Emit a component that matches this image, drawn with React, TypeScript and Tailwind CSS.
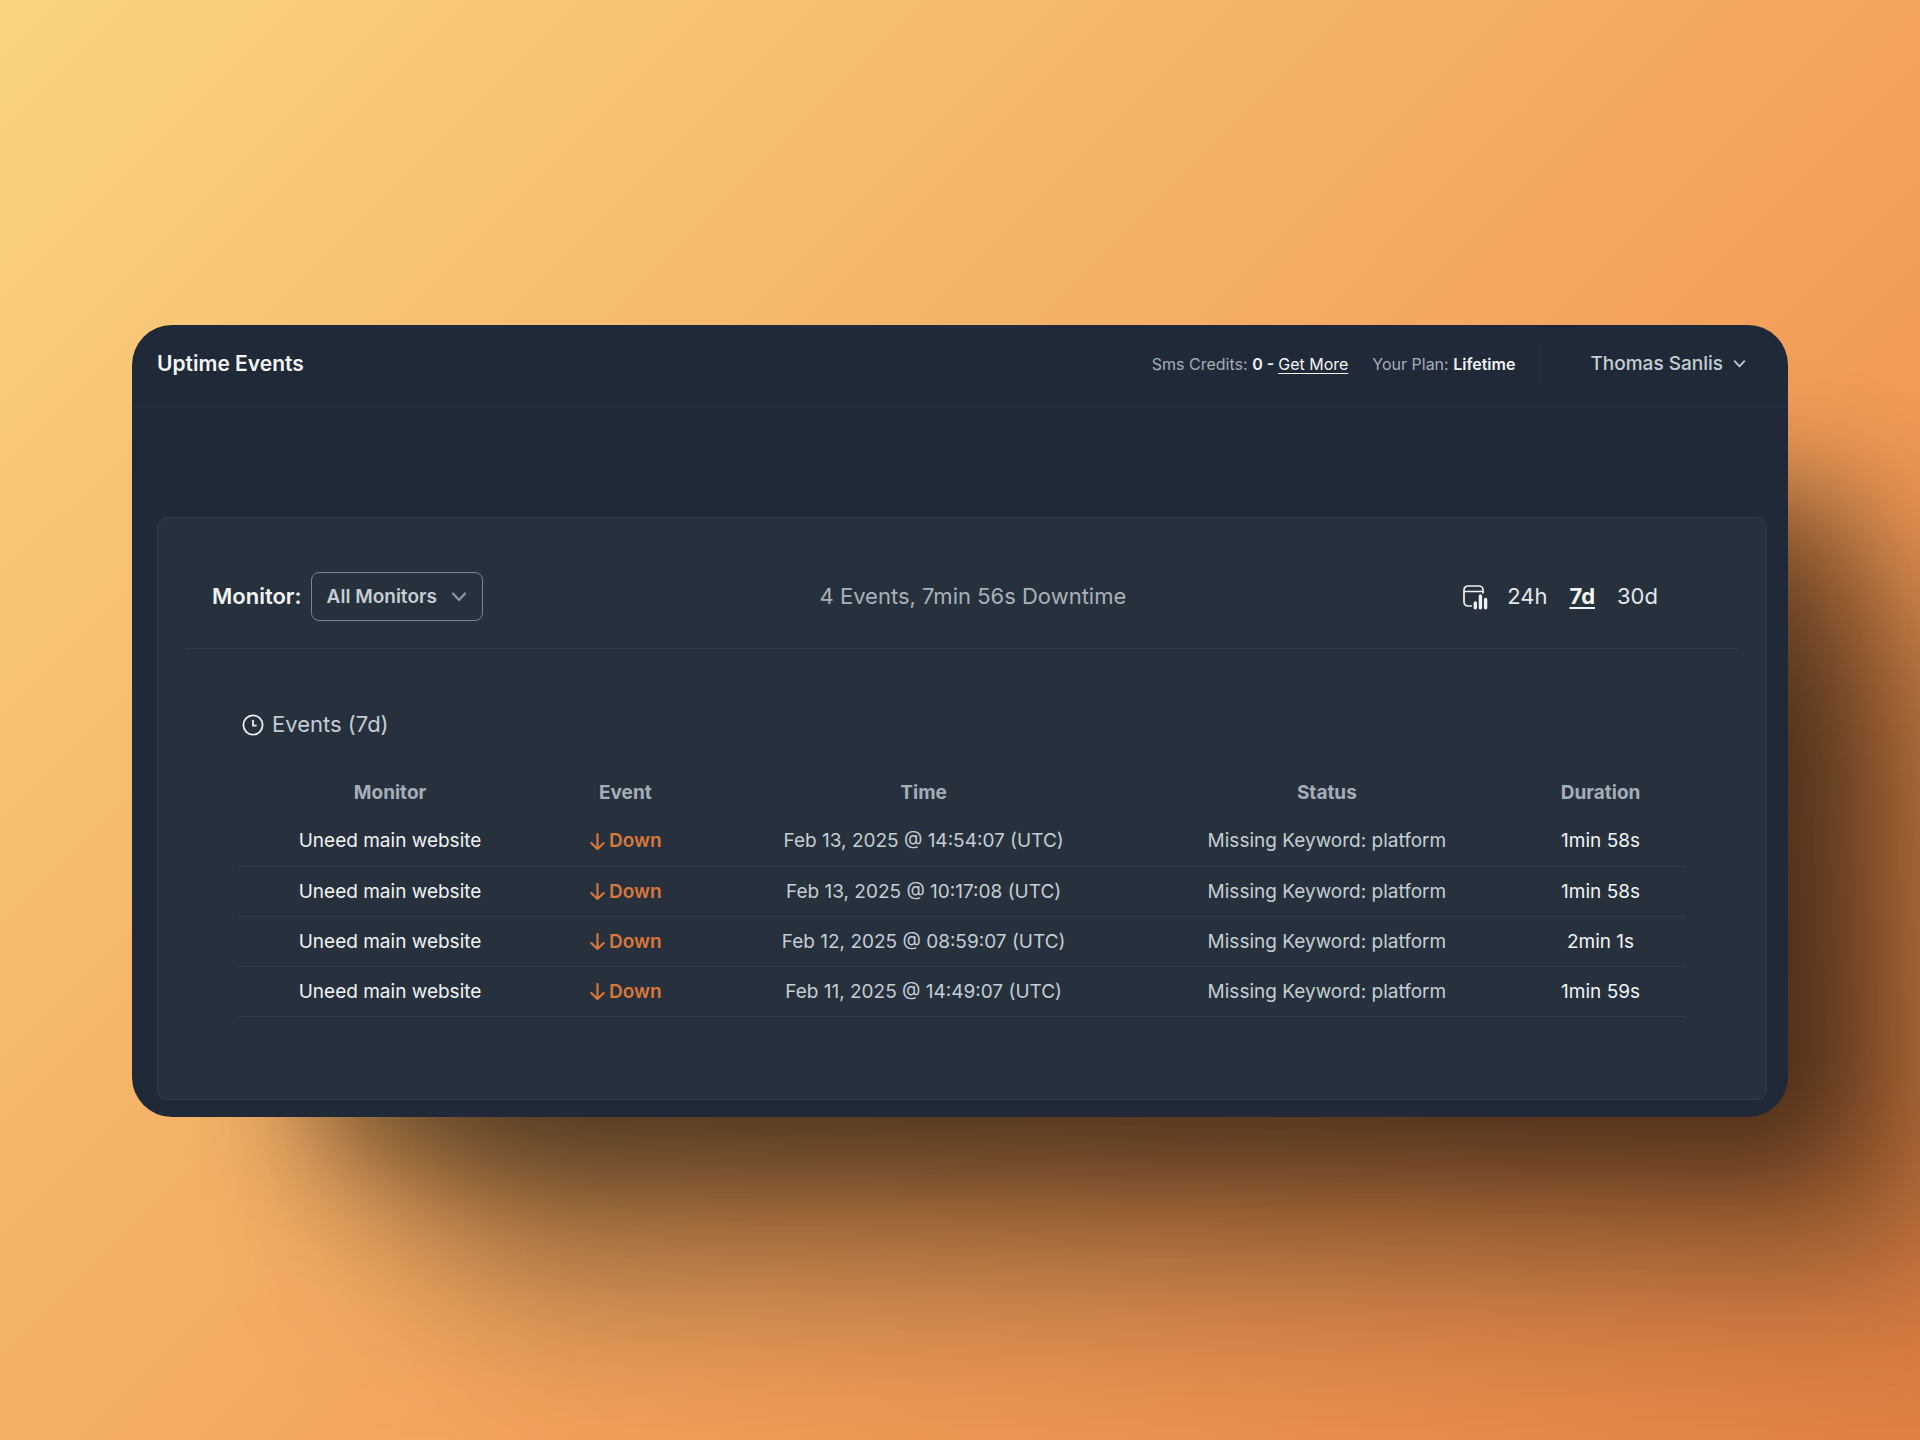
import * as React from "react";

type Range = "24h" | "7d" | "30d";

interface UptimeEvent {
  id: number;
  monitor: string;
  time: string;
  status: string;
  duration: string;
}

const ranges: Range[] = ["24h", "7d", "30d"];

const events: UptimeEvent[] = [
  { id: 1, monitor: "Uneed main website", time: "Feb 13, 2025 @ 14:54:07 (UTC)", status: "Missing Keyword: platform", duration: "1min 58s" },
  { id: 2, monitor: "Uneed main website", time: "Feb 13, 2025 @ 10:17:08 (UTC)", status: "Missing Keyword: platform", duration: "1min 58s" },
  { id: 3, monitor: "Uneed main website", time: "Feb 12, 2025 @ 08:59:07 (UTC)", status: "Missing Keyword: platform", duration: "2min 1s" },
  { id: 4, monitor: "Uneed main website", time: "Feb 11, 2025 @ 14:49:07 (UTC)", status: "Missing Keyword: platform", duration: "1min 59s" },
];

function ChevronIcon({ className }: { className?: string }) {
  return (
    <svg viewBox="0 0 16 10" fill="none" stroke="currentColor" strokeWidth="2.2" strokeLinecap="round" strokeLinejoin="round" className={className} aria-hidden="true">
      <path d="M2 1.5 8 8l6-6.5" />
    </svg>
  );
}

function ClockIcon() {
  return (
    <svg viewBox="0 0 22 22" fill="none" stroke="currentColor" strokeWidth="1.8" className="size-[22px] text-[#eef1f4]" aria-hidden="true">
      <circle cx="11" cy="11" r="9.6" />
      <path d="M11 6v5.7h3.6" strokeLinejoin="round" />
    </svg>
  );
}

function ArrowDownIcon() {
  return (
    <svg viewBox="0 1 16 18" fill="none" stroke="currentColor" strokeWidth="2.1" strokeLinecap="round" strokeLinejoin="round" className="h-[18px] w-4" aria-hidden="true">
      <path d="M8.5 2v15M2.3 11l6.2 6 6.2-6" />
    </svg>
  );
}

function CalendarStatsIcon() {
  return (
    <svg viewBox="0 -3 25 28" fill="none" stroke="currentColor" className="h-7 w-[25px] text-[#eef1f4]" aria-hidden="true">
      <path d="M9 21H5a4 4 0 0 1-4-4V5a4 4 0 0 1 4-4h11a4 4 0 0 1 4 4v3.5M1 6.5h19" strokeWidth="1.7" />
      <path d="M12.3 18v4.8M17.4 11v11.8M22.6 14.5v8.3" strokeWidth="3.4" strokeLinecap="round" />
    </svg>
  );
}

function Header() {
  return (
    <header className="flex h-[82px] items-start justify-between border-b border-[#28323f] pt-3 pr-[42px] pl-[25px]">
      <h1 className="flex h-[54px] items-center text-[21px] font-semibold text-[#f5f7f9]">Uptime Events</h1>

      <div className="flex h-[54px] items-center text-base text-[#a3adb8]">
        <p>
          Sms Credits: <span className="font-semibold text-[#f1f4f6]">0 - </span>
          <a href="#credits" className="text-[#f1f4f6] underline underline-offset-3">Get More</a>
        </p>
        <p className="ml-6">
          Your Plan: <span className="font-semibold text-[#f1f4f6]">Lifetime</span>
        </p>
        <button type="button" className="ml-6 flex h-full items-center gap-2.5 border-l border-[#28323f] pl-[50px] text-[19px] font-medium text-[#c5cdd4]">
          Thomas Sanlis
          <ChevronIcon className="h-2 w-[13px]" />
        </button>
      </div>
    </header>
  );
}

function Toolbar({ range, onRangeChange }: { range: Range; onRangeChange: (range: Range) => void }) {
  return (
    <div className="mx-[27px] flex items-center justify-between border-b border-[#323d48] pr-[81px] pb-[27px] pl-[27px]">
      <div className="flex items-center gap-[9px]">
        <label htmlFor="monitor" className="text-[22px] font-semibold text-[#f1f4f6]">Monitor:</label>
        <div className="relative">
          <select id="monitor" className="h-[49px] w-[172px] appearance-none rounded-lg border border-[#7a848e] bg-transparent px-[15px] pt-0.5 text-[19px] font-semibold text-[#c5cdd4]">
            <option>All Monitors</option>
          </select>
          <ChevronIcon className="pointer-events-none absolute top-5 right-4 h-[10px] w-4 text-[#8d98a2]" />
        </div>
      </div>

      <p className="text-[22px] text-[#a7b1ba]">4 Events, 7min 56s Downtime</p>

      <div className="flex items-center gap-[19px]">
        <CalendarStatsIcon />
        <div className="flex gap-[22px] text-[22px] text-[#e3e7eb]">
          {ranges.map((item) => (
            <button
              key={item}
              type="button"
              aria-pressed={item === range}
              onClick={() => onRangeChange(item)}
              className={item === range ? "font-bold text-[#f1f4f6] underline underline-offset-3" : ""}
            >
              {item}
            </button>
          ))}
        </div>
      </div>
    </div>
  );
}

function EventsTable() {
  return (
    <table className="mt-[30px] w-full table-fixed border-collapse text-center text-[19px] text-[#c5cdd4]">
      <colgroup>
        <col className="w-[21%]" />
        <col className="w-[11.5%]" />
        <col className="w-[29.7%]" />
        <col className="w-[26%]" />
        <col className="w-[11.8%]" />
      </colgroup>
      <thead>
        <tr className="h-12 text-[#a3aeb8]">
          <th>Monitor</th>
          <th>Event</th>
          <th>Time</th>
          <th>Status</th>
          <th>Duration</th>
        </tr>
      </thead>
      <tbody>
        {events.map((event) => (
          <tr key={event.id} className="h-[50px] border-b border-[#323d48]">
            <td className="text-[#f1f4f6]">{event.monitor}</td>
            <td className="font-semibold text-[#d9773a]">
              <div className="flex items-center justify-center gap-1">
                <ArrowDownIcon />
                Down
              </div>
            </td>
            <td>{event.time}</td>
            <td>{event.status}</td>
            <td className="text-[#f1f4f6]">{event.duration}</td>
          </tr>
        ))}
      </tbody>
    </table>
  );
}

export default function App() {
  const [range, setRange] = React.useState<Range>("7d");

  return (
    <main className="flex min-h-screen items-center overflow-hidden bg-linear-[135deg,#f9d480_0%,#f5b56b_35%,#f2a05b_62%,#e38244_100%] px-[132px] pt-0.5 font-[Inter,sans-serif]">
      <div className="w-full rounded-[40px] bg-[#202938] pr-[21px] pb-[17px] shadow-[118px_104px_110px_-62px_rgba(0,0,0,0.46),208px_195px_160px_-58px_rgba(0,0,0,0.38),320px_310px_140px_-60px_rgba(0,0,0,0.08)]">
        <div className="-mr-[21px]">
          <Header />
        </div>

        <section className="mt-[110px] ml-[25px] rounded-[10px] border border-[#323d48] bg-[#27313d] pt-[54px] pb-[82px]">
          <Toolbar range={range} onRangeChange={setRange} />

          <div className="mt-[62px] px-20">
            <h2 className="flex h-7 items-center gap-2 pl-1 text-[22px] text-[#c5cdd4]">
              <ClockIcon />
              Events ({range})
            </h2>
            <EventsTable />
          </div>
        </section>
      </div>
    </main>
  );
}
